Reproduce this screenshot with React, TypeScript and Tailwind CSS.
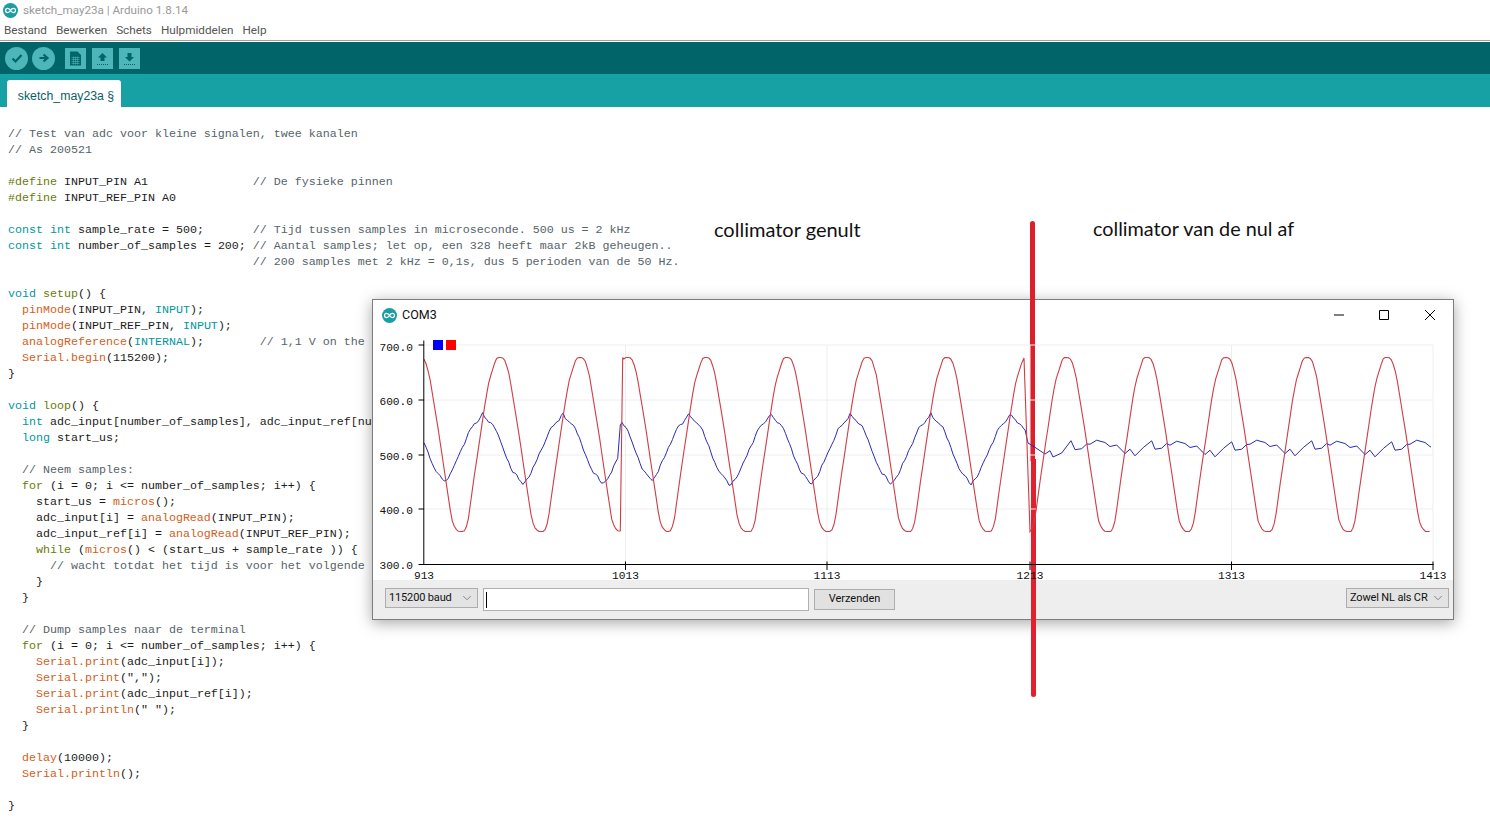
import { ChevronDown } from "lucide-react";

const code = [
  "// Test van adc voor kleine signalen, twee kanalen",
  "// As 200521",
  "",
  "#define INPUT_PIN A1               // De fysieke pinnen",
  "#define INPUT_REF_PIN A0",
  "",
  "const int sample_rate = 500;       // Tijd tussen samples in microseconde. 500 us = 2 kHz",
  "const int number_of_samples = 200; // Aantal samples; let op, een 328 heeft maar 2kB geheugen..",
  "                                   // 200 samples met 2 kHz = 0,1s, dus 5 perioden van de 50 Hz.",
  "",
  "void setup() {",
  "  pinMode(INPUT_PIN, INPUT);",
  "  pinMode(INPUT_REF_PIN, INPUT);",
  "  analogReference(INTERNAL);        // 1,1 V on the",
  "  Serial.begin(115200);",
  "}",
  "",
  "void loop() {",
  "  int adc_input[number_of_samples], adc_input_ref[nu",
  "  long start_us;",
  "",
  "  // Neem samples:",
  "  for (i = 0; i <= number_of_samples; i++) {",
  "    start_us = micros();",
  "    adc_input[i] = analogRead(INPUT_PIN);",
  "    adc_input_ref[i] = analogRead(INPUT_REF_PIN);",
  "    while (micros() < (start_us + sample_rate )) {",
  "      // wacht totdat het tijd is voor het volgende",
  "    }",
  "  }",
  "",
  "  // Dump samples naar de terminal",
  "  for (i = 0; i <= number_of_samples; i++) {",
  "    Serial.print(adc_input[i]);",
  '    Serial.print(",");',
  "    Serial.print(adc_input_ref[i]);",
  '    Serial.println(" ");',
  "  }",
  "",
  "  delay(10000);",
  "  Serial.println();",
  "",
  "}",
];

const tokenRe =
  /(\/\/.*$|#define|\b(?:const|int|void|long|INPUT|INTERNAL|for|while|setup|loop|pinMode|analogReference|analogRead|micros|delay|Serial\.begin|Serial\.println|Serial\.print)\b)/;

function tokenClass(tok: string) {
  if (tok.startsWith("//")) return "text-[#56636a]";
  if (["const", "int", "void", "long", "INPUT", "INTERNAL"].includes(tok)) return "text-[#00979c]";
  if (["#define", "for", "while", "setup", "loop"].includes(tok)) return "text-[#6a7a0a]";
  return "text-[#d2601a]";
}

function CodeLine({ line }: { line: string }) {
  const parts = line.split(tokenRe).filter(Boolean);
  return (
    <div className="h-4 whitespace-pre">
      {parts.map((p, i) =>
        tokenRe.test(p) ? (
          <span key={i} className={tokenClass(p)}>
            {p}
          </span>
        ) : (
          <span key={i}>{p}</span>
        ),
      )}
    </div>
  );
}

function lerpKeys(keys: number[][], dx: number) {
  if (dx <= keys[0][0]) return keys[0][1];
  for (let i = 1; i < keys.length; i++) {
    if (dx <= keys[i][0]) {
      const [x0, y0] = keys[i - 1];
      const [x1, y1] = keys[i];
      return y0 + ((y1 - y0) * (dx - x0)) / (x1 - x0);
    }
  }
  return keys[keys.length - 1][1];
}

const redKeys = [
  [-40, 531.5], [-37, 531.5], [-35, 528], [-32.8, 520], [-27, 478], [-15.4, 400], [-12, 381], [-5, 359], [-3, 357.5],
  [0, 357.5], [2, 358], [4.3, 361], [8.3, 375], [17.5, 431], [22.5, 465], [30.8, 520], [34, 528], [37.5, 531.5], [40, 531.5],
];

const blueKeys = [
  [-41, 486], [-37, 481], [-34, 477], [-31, 472], [-29, 466], [-26, 460], [-22, 451], [-18, 443],
  [-15.7, 437], [-12, 428], [-9, 424.7], [-6, 423], [-3, 419], [0, 412], [2, 418], [4.3, 420],
  [8, 423], [12.7, 428], [15, 434], [17.7, 441], [21, 450], [24, 458], [28, 468], [31, 473],
  [34, 475], [37, 480], [41, 486],
];

function sampleWave(from: number, to: number, peaks: number[], keys: number[][], jitter = 0) {
  const pts: number[][] = [];
  for (let x = from; x <= to; x += 2.018) {
    const peak = peaks.reduce((a, b) => (Math.abs(b - x) < Math.abs(a - x) ? b : a));
    const y = lerpKeys(keys, x - peak) + jitter * Math.sin(x * 1.7) * Math.cos(x * 0.63);
    pts.push([x, y]);
  }
  return pts;
}

// noise after the collimator was moved, one 80px period read off the plot
const noisePeriod = [
  [0, 444.7], [6.7, 440.7], [15, 443], [20, 447], [26.7, 445.5], [35, 454], [40, 449.7], [45, 456.3],
  [53.3, 448], [61.7, 441.3], [65, 449.7], [71.7, 448.7], [76.7, 444],
];

function bluePoints() {
  const a = sampleWave(424, 619, [406, 482.7, 562.7, 642.7], blueKeys, 1);
  const b = sampleWave(622, 1024, [614, 689, 770.7, 850.7, 930.7, 1010.7], blueKeys, 1);
  const c: number[][] = [
    [1025, 429.7], [1028, 443], [1036, 448], [1045, 454], [1050, 450.7], [1053, 457], [1061.7, 453],
    [1071, 440.7], [1075, 449.7], [1081.7, 448.7], [1086.7, 444],
  ];
  for (let start = 1090; start < 1430; start += 80) {
    for (const [dx, y] of noisePeriod) {
      const x = start + dx;
      if (x <= 1431) c.push([x, y + ((start / 80) % 2 < 1 ? 0.5 : -0.5)]);
    }
  }
  c.push([1431, 447]);
  return [...a, [620.3, 425], ...b, ...c];
}

function redPoints() {
  const a = sampleWave(424, 618.3, [421, 501, 581], redKeys);
  const b = sampleWave(624, 1023.5, [628.7, 707, 788, 868, 948, 1028], redKeys);
  const c = sampleWave(1030, 1430.6, [1067.5, 1148, 1227, 1308, 1388], redKeys);
  return [...a, [620.3, 531], [622.7, 358], ...b, [1024, 358], [1030, 531], ...c];
}

const toPath = (pts: number[][]) => pts.map(([x, y]) => `${x.toFixed(1)},${y.toFixed(1)}`).join(" ");

function ArduinoLogo({ size }: { size: number }) {
  return (
    <svg width={size} height={size} viewBox="0 0 16 16">
      <circle cx="8" cy="8" r="8" fill="#1a9ea3" />
      <path
        d="M8 8C7 6.4 6 5.8 4.9 5.8 3.6 5.8 2.7 6.8 2.7 8s.9 2.2 2.2 2.2C6 10.2 7 9.6 8 8c1-1.6 2-2.2 3.1-2.2 1.3 0 2.2 1 2.2 2.2s-.9 2.2-2.2 2.2C10 10.2 9 9.6 8 8z"
        fill="none"
        stroke="#fff"
        strokeWidth="1.3"
      />
    </svg>
  );
}

function RoundButton({ children }: { children: React.ReactNode }) {
  return <div className="flex h-[23px] w-[23px] items-center justify-center rounded-full bg-[#4db6ba]">{children}</div>;
}

function SquareButton({ children }: { children: React.ReactNode }) {
  return <div className="flex h-[21px] w-[21px] items-center justify-center bg-[#4db6ba]">{children}</div>;
}

function Toolbar() {
  return (
    <div className="flex h-[32px] items-center bg-[#006468] pl-[5px]">
      <div className="flex gap-[4px]">
        <RoundButton>
          <svg width="14" height="14" viewBox="0 0 14 14">
            <path d="M2.5 7.5l3 3 6-6.5" fill="none" stroke="#006468" strokeWidth="2.2" />
          </svg>
        </RoundButton>
        <RoundButton>
          <svg width="14" height="14" viewBox="0 0 14 14">
            <path d="M2.5 7h6.5M6.5 3.5L10.5 7l-4 3.5" fill="none" stroke="#006468" strokeWidth="2.2" />
          </svg>
        </RoundButton>
      </div>
      <div className="ml-[10px] flex gap-[6px]">
        <SquareButton>
          <svg width="11" height="15" viewBox="0 0 11 15">
            <path d="M0 .5h7.5L11 4v10.5H0z" fill="#006468" />
            <path d="M1.5 6.5h8M1.5 8.5h8M1.5 10.5h8M1.5 12.5h8M3.5 5.5v8M5.5 5.5v8M7.5 5.5v8" stroke="#4db6ba" strokeWidth=".6" />
          </svg>
        </SquareButton>
        <SquareButton>
          <svg width="13" height="15" viewBox="0 0 13 15">
            <path d="M6.5 2L11 6.5H8.5V10h-4V6.5H2z" fill="#006468" />
            <path d="M1 13.5h11" stroke="#006468" strokeWidth="1" strokeDasharray="1 1" />
          </svg>
        </SquareButton>
        <SquareButton>
          <svg width="13" height="15" viewBox="0 0 13 15">
            <path d="M6.5 10.5L11 6H8.5V2h-4v4H2z" fill="#006468" />
            <path d="M1 13.5h11" stroke="#006468" strokeWidth="1" strokeDasharray="1 1" />
          </svg>
        </SquareButton>
      </div>
    </div>
  );
}

function Plot() {
  const gridY = [345, 400, 455, 509];
  const gridX = [625.5, 827, 1030, 1231.5, 1433];
  const yLabels = [
    ["700.0", 345, 351],
    ["600.0", 400, 405],
    ["500.0", 455, 460],
    ["400.0", 509, 514],
    ["300.0", 564.5, 569],
  ] as const;
  const xLabels = [
    ["913", 424],
    ["1013", 625.5],
    ["1113", 827],
    ["1213", 1030],
    ["1313", 1231.5],
    ["1413", 1433],
  ] as const;
  return (
    <svg width="1080" height="254" viewBox="373 330 1080 254" className="relative z-10 -mb-[4px] block">
      {gridY.map((y) => (
        <line key={y} x1="424" x2="1433" y1={y} y2={y} stroke="#eeeeee" />
      ))}
      {gridX.map((x) => (
        <line key={x} x1={x} x2={x} y1="345" y2="564" stroke="#eeeeee" />
      ))}
      <polyline points={toPath(bluePoints())} fill="none" stroke="#2a2ab4" strokeWidth="1" />
      <polyline points={toPath(redPoints())} fill="none" stroke="#cf3d45" strokeWidth="1.1" />
      <path d="M423.8 340.5V564.5H1433.5" fill="none" stroke="#000" strokeWidth="1" />
      {yLabels.map(([t, y]) => (
        <line key={t} x1="418.5" x2="424" y1={y} y2={y} stroke="#000" />
      ))}
      {xLabels.slice(1).map(([t, x]) => (
        <line key={t} x1={x} x2={x} y1="561.5" y2="570" stroke="#000" />
      ))}
      {yLabels.map(([t, y, b]) => (
        <text key={t} x="413" y={b} textAnchor="end" fontSize="11.2" fill="#111" className="font-['Liberation_Mono']">
          {t}
        </text>
      ))}
      {xLabels.map(([t, x]) => (
        <text key={t} x={x} y="579" textAnchor="middle" fontSize="11.2" fill="#111" className="font-['Liberation_Mono']">
          {t}
        </text>
      ))}
      <rect x="433" y="340" width="10" height="10" fill="#0000ff" />
      <rect x="446" y="340" width="10" height="10" fill="#ff0000" />
    </svg>
  );
}

function SelectBox({ label, width }: { label: string; width: string }) {
  return (
    <div className={`flex h-5 items-center justify-between border border-[#adadad] bg-[#e3e3e3] pl-[3px] pr-[3px] ${width}`}>
      <span className="whitespace-nowrap tracking-[-0.15px]">{label}</span>
      <ChevronDown size={14} strokeWidth={1} className="shrink-0 text-[#444]" />
    </div>
  );
}

function PlotterWindow() {
  return (
    <div className="absolute left-[372px] top-[299px] flex h-[321px] w-[1082px] flex-col border border-[#7d7d7d] bg-white font-['Roboto',sans-serif] text-[11px] text-[#111] shadow-[0_3px_14px_rgba(0,0,0,0.35)]">
      <div className="flex h-[30px] items-center pl-[9px] pr-[18px]">
        <ArduinoLogo size={15} />
        <span className="ml-[5px] flex-1 text-[12.5px]">COM3</span>
        <svg width="101" height="12" viewBox="0 0 101 12" className="text-black">
          <path d="M0 6h10M45.5 1.5h9v9h-9zM91 1l10 10M101 1L91 11" fill="none" stroke="currentColor" />
        </svg>
      </div>
      <Plot />
      <div className="flex h-[39px] items-start gap-[5px] bg-[#eeeeee] pl-[12px] pr-[4px] pt-[8px]">
        <SelectBox label="115200 baud" width="w-[93px]" />
        <div className="flex h-[23px] w-[326px] items-center border border-[#b0b0b0] bg-white pl-[2px]">
          <div className="h-4 w-px bg-black" />
        </div>
        <div className="mt-[1px] flex h-[21px] w-[81px] items-center justify-center border border-[#adadad] bg-[#e1e1e1]">
          Verzenden
        </div>
        <div className="flex-1" />
        <SelectBox label="Zowel NL als CR" width="w-[103px]" />
      </div>
    </div>
  );
}

export default function App() {
  return (
    <div className="relative h-screen w-full overflow-hidden bg-white">
      <div className="flex h-[21px] items-center gap-[5px] pl-[3px] font-['Roboto',sans-serif] text-[11.65px] text-[#999999]">
        <ArduinoLogo size={15} />
        <span>sketch_may23a | Arduino 1.8.14</span>
      </div>
      <div className="flex h-[20px] items-center gap-[9px] border-b border-[#a0a0a0] pl-1 pt-[1px] font-['Roboto',sans-serif] text-[11.75px] text-[#555555]">
        <span>Bestand</span>
        <span>Bewerken</span>
        <span>Schets</span>
        <span>Hulpmiddelen</span>
        <span>Help</span>
      </div>
      <div className="h-px bg-white" />
      <Toolbar />
      <div className="flex h-[33px] items-end bg-[#17a1a5] pl-[7px]">
        <div className="flex h-[27px] w-[114px] items-center justify-center rounded-t-[3px] bg-white pl-[4px] pt-[5px] font-['Liberation_Sans',sans-serif] text-[12.3px] text-[#0b5f63]">
          sketch_may23a §
        </div>
      </div>
      <div className="pl-2 pt-[19px] font-['Liberation_Mono',monospace] text-[11.67px] leading-4 text-[#1c1c1c]">
        {code.map((line, i) => (
          <CodeLine key={i} line={line} />
        ))}
      </div>
      <PlotterWindow />
      <span className="absolute left-[714px] top-[217px] font-['Lato',sans-serif] text-[20px] leading-6 text-[#111]">
        collimator genult
      </span>
      <span className="absolute left-[1093px] top-[216px] font-['Lato',sans-serif] text-[19.8px] leading-6 text-[#111]">
        collimator van de nul af
      </span>
      <div className="absolute left-[1030px] top-[221px] h-[240px] w-[5px] rounded-t-full bg-[#dc1f2b]" />
      <div className="absolute left-[1031px] top-[459px] h-[238px] w-[5px] rounded-b-full bg-[#e0222e]" />
    </div>
  );
}
